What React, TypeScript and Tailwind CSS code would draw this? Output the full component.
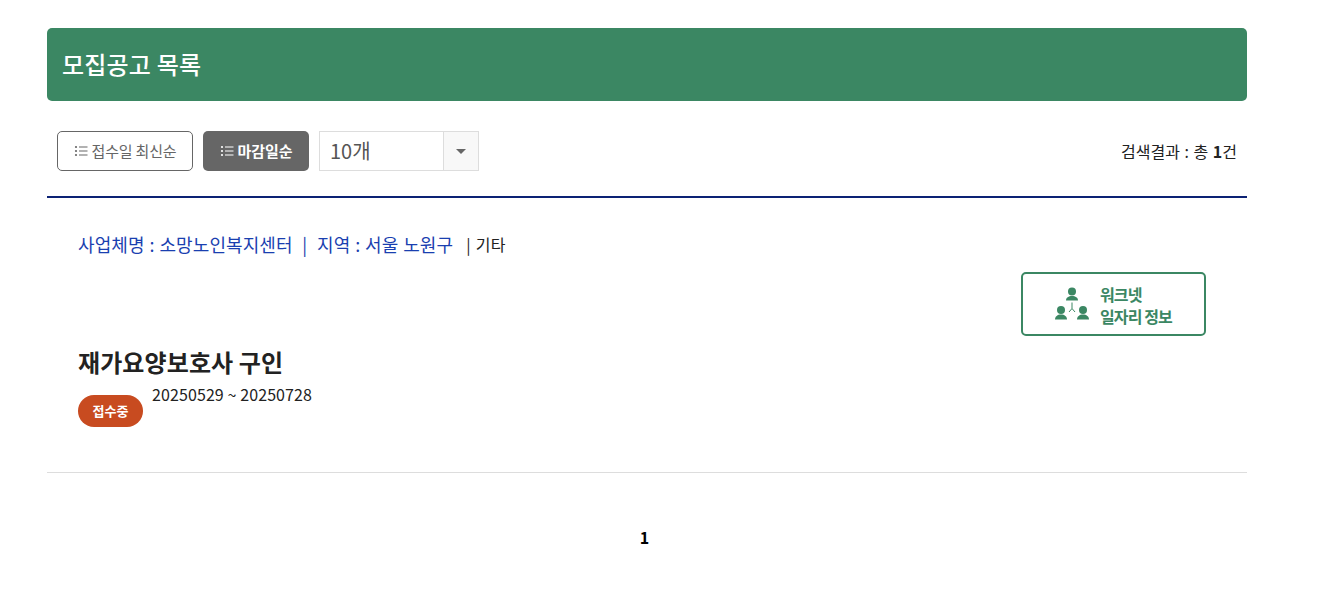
import React from "react";

function ListIcon({ className }: { className?: string }) {
  return (
    <svg width="14" height="14" viewBox="0 0 14 14" className={className} fill="currentColor">
      <circle cx="2" cy="3" r="1.1" />
      <circle cx="2" cy="7" r="1.1" />
      <circle cx="2" cy="11" r="1.1" />
      <rect x="5" y="2.500" width="8.500" height="1" />
      <rect x="5" y="6.500" width="8.500" height="1" />
      <rect x="5" y="10.500" width="8.500" height="1" />
    </svg>
  );
}

function PeopleIcon() {
  return (
    <svg width="34" height="34" viewBox="0 0 34 34" fill="#3b8763">
      <circle cx="17" cy="4.500" r="4" />
      <path d="M11 13.500c0-3 2.500-4.500 6-4.500s6 1.500 6 4.500z" />
      <circle cx="6" cy="23" r="4" />
      <path d="M0 32.500c0-3 2.500-5 6-5s6 2 6 5z" />
      <circle cx="28" cy="23" r="4" />
      <path d="M22 32.500c0-3 2.500-5 6-5s6 2 6 5z" />
      <path d="M17 15.500v6l-3 3.500M17 21.500l3 3.500" fill="none" stroke="#3b8763" strokeWidth="1" />
    </svg>
  );
}

export default function App() {
  const font = "font-['Noto_Sans_CJK_KR','Noto_Sans',sans-serif]";
  return (
    <div className={`${font} w-[1334px] h-[598px] bg-white overflow-hidden pl-[47px] pt-[28px]`}>
      <div className="w-[1200px]">
        <div className="h-[73px] bg-[#3b8763] rounded-[5px] flex items-center pl-[15px] pb-[2px]">
          <h2 className="text-[24px] font-medium text-white tracking-[0.2px]">모집공고 목록</h2>
        </div>

        <div className="flex items-center h-[40px] mt-[30px] pl-[10px] pr-[10px]">
          <button className="w-[136px] h-[40px] rounded-[5px] border border-[#666] bg-white text-[#666] text-[15px] flex items-center justify-center gap-[4px] tracking-[-0.2px]">
            <ListIcon />
            접수일 최신순
          </button>
          <button className="ml-[10px] w-[106px] h-[40px] rounded-[5px] bg-[#666] text-white text-[15px] font-bold flex items-center justify-center gap-[4px] tracking-[-0.1px]">
            <ListIcon />
            마감일순
          </button>
          <div className="ml-[10px] w-[160px] h-[40px] border border-[#ddd] flex">
            <div className="flex-1 flex items-center pl-[10px] text-[20px] text-[#555]">10개</div>
            <div className="w-[35px] border-l border-[#ddd] bg-[#f8f8f8] flex items-center justify-center">
              <div className="w-0 h-0 border-l-[5px] border-r-[5px] border-t-[5px] border-l-transparent border-r-transparent border-t-[#666]" />
            </div>
          </div>
          <div className="ml-auto text-[16px] text-[#222] [word-spacing:1px]">
            검색결과 : 총 <b>1</b>건
          </div>
        </div>

        <div className="mt-[25px] h-[2px] bg-[#0c2274]" />

        <div className="border-b border-[#ddd] h-[275px] pl-[31px] pr-[41px] pt-[34px]">
          <div className="flex items-center h-[26px] pb-[2px] text-[18px]">
            <span className="text-[#1a3fb0] tracking-[0.1px] [word-spacing:0.7px]">사업체명 : 소망노인복지센터&nbsp; | &nbsp;지역 : 서울 노원구</span>
            <span className="ml-[13px] text-[16px] text-[#222] tracking-[0.3px] [word-spacing:1px]">| 기타</span>
          </div>
          <div className="flex justify-end mt-[14px]">
            <div className="w-[185px] h-[64px] border-2 border-[#3b8763] rounded-[5px] flex items-center pl-[32px] gap-[11px]">
              <PeopleIcon />
              <div className="text-[16px] font-bold leading-[22px] text-[#3b8763] tracking-[-0.9px] pt-[1px]">
                <div>워크넷</div>
                <div>일자리 정보</div>
              </div>
            </div>
          </div>
          <h3 className="mt-[7px] text-[24px] leading-[38px] font-bold text-[#222] tracking-[0.1px]">재가요양보호사 구인</h3>
          <div className="flex mt-[1px]">
            <span className="mt-[13px] w-[65px] h-[32px] rounded-full bg-[#c84b20] text-white text-[13px] font-bold flex items-center justify-center">접수중</span>
            <span className="ml-[9px] text-[16px] leading-[24px] text-[#222] tracking-[0.1px]">20250529 ~ 20250728</span>
          </div>
        </div>

        <div className="mt-[52px] text-center text-[16px] font-bold text-black leading-[24px] pr-[5px]">1</div>
      </div>
    </div>
  );
}
